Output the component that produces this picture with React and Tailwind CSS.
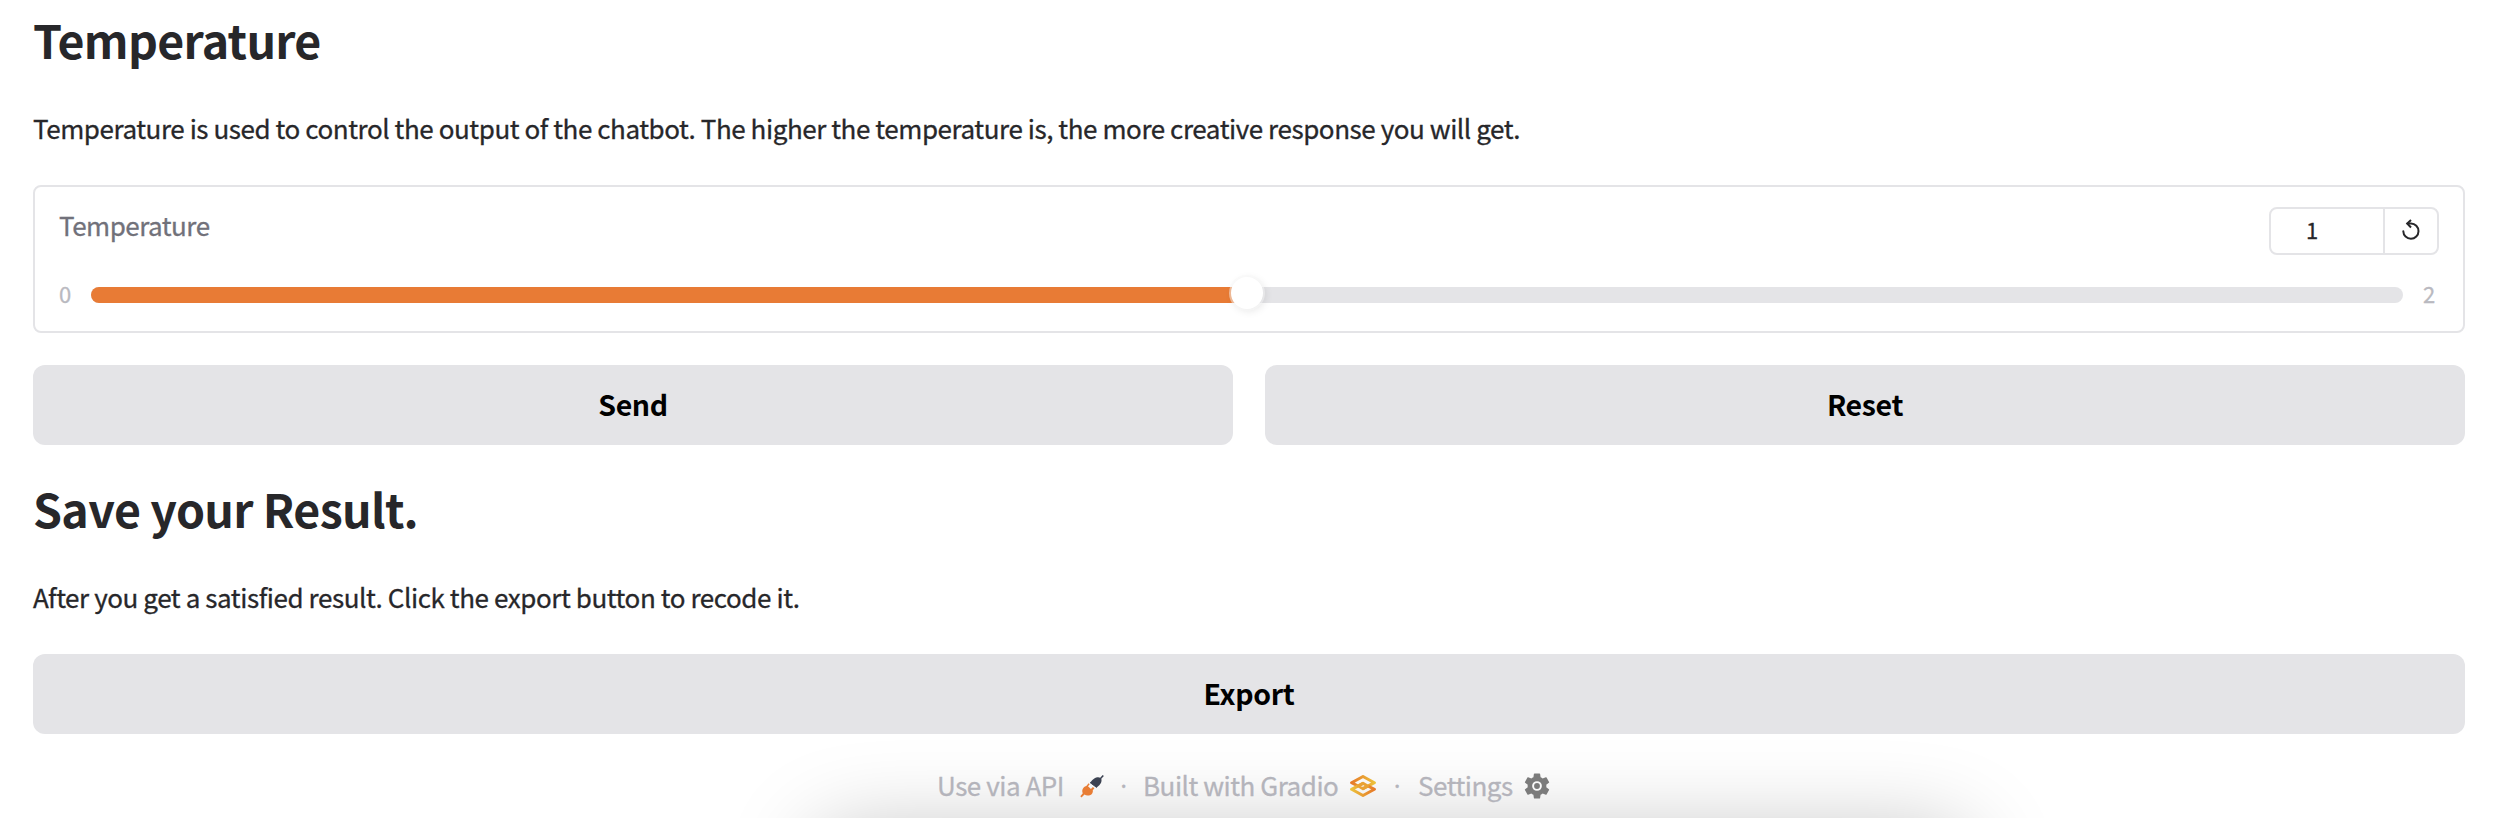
const PlugIcon = () => (
  <svg viewBox="0 0 24 24" className="h-6 w-6 shrink-0" fill="none">
    <path d="M10 8.500C11.500 7 14 3.500 17.500 3.200c1.200-.1 2 .1 2.700.6L22.700 .9l1.200 1.100-2.600 2.800c.8 2.700-.3 5.700-4.600 8.700Z" fill="#3c4252" />
    <path d="M10 8.500 16.700 13.500" stroke="#3c4252" strokeWidth="1" />
    <path d="M8.600 9.200l1.100 1.100-1.700 2 2.900 2.700 2-1.900 1.500 1.200-1.600 1.900c.4 2-.6 4.200-2.900 5-2 .7-4 .4-5.400-.6L1.500 23.500l-1.200-1.200 2.500-3.100c-1.200-2.600-.4-5.900 3.500-7.300Z" fill="#e87d35" />
  </svg>
);

const LayersIcon = () => (
  <svg viewBox="0 0 26 22" className="h-[22px] w-[26px] shrink-0" fill="none">
    <defs>
      <linearGradient id="upper" x1="0" y1="8" x2="26" y2="8" gradientUnits="userSpaceOnUse">
        <stop stopColor="#e67528" />
        <stop offset="1" stopColor="#ecc53c" />
      </linearGradient>
      <linearGradient id="lower" x1="26" y1="14" x2="0" y2="14" gradientUnits="userSpaceOnUse">
        <stop stopColor="#e67528" />
        <stop offset="1" stopColor="#ecc53c" />
      </linearGradient>
    </defs>
    <path d="M8 11 1.600 7.700 13 1.500l11.400 6.200L13 13.700" stroke="url(#upper)" strokeWidth="3" strokeLinejoin="round" />
    <path d="M18 11l6.400 3.300L13 20.500 1.600 14.300 13 8.300" stroke="url(#lower)" strokeWidth="3" strokeLinejoin="round" />
    <path d="M13 8.300 17.500 11 13 13.700 8.500 11Z" stroke="#e9a233" strokeWidth="3" strokeLinejoin="round" />
  </svg>
);

const GearIcon = () => (
  <svg viewBox="2 2 20 20" className="h-[26px] w-[26px] shrink-0">
    <path fill="#7b7b7b" d="M19.140 12.940c.04-.3.060-.61.060-.94 0-.32-.02-.64-.07-.94l2.030-1.580a.49.490 0 0 0 .12-.61l-1.920-3.320a.488.488 0 0 0-.59-.22l-2.390.96c-.5-.38-1.030-.7-1.620-.94l-.36-2.540a.484.484 0 0 0-.48-.41h-3.840c-.24 0-.43.170-.47.410l-.36 2.540c-.59.240-1.130.570-1.620.940l-2.390-.96c-.22-.08-.47 0-.59.220L2.740 8.870c-.12.210-.08.470.12.610l2.030 1.580c-.05.3-.09.630-.09.940s.02.640.07.940l-2.030 1.580a.49.490 0 0 0-.12.610l1.920 3.320c.12.220.37.290.59.220l2.390-.96c.5.380 1.030.7 1.620.94l.36 2.540c.05.240.240.410.480.410h3.840c.24 0 .44-.17.470-.41l.36-2.540c.59-.24 1.130-.56 1.620-.94l2.390.96c.22.080.47 0 .59-.22l1.920-3.320c.12-.22.070-.47-.12-.61l-2.010-1.580z" />
    <circle cx="12" cy="12" r="3" fill="none" stroke="#fafafa" strokeWidth="1.500" />
  </svg>
);

const UndoIcon = () => (
  <svg viewBox="0 0 18 21" className="h-[21px] w-[18px]" fill="none" stroke="#27272a" strokeWidth="2" strokeLinecap="round">
    <path d="M1.300 12.200A7.600 7.600 0 1 0 9 4.500H5.500" />
    <path d="M9 1 5.200 4.500 9 8.500" strokeLinecap="butt" />
  </svg>
);

const Action = ({ children }) => (
  <button className="h-20 flex-1 rounded-xl bg-[#e4e4e7] pb-[3px] text-[28.5px] leading-[77px] font-bold tracking-[-0.35px] text-black">{children}</button>
);

export default function App() {
  return (
    <main className="relative h-[818px] w-[2500px] overflow-hidden bg-white pr-[35px] pl-[33px] font-['Noto_Sans_CJK_SC',sans-serif] text-[#27272a]">
      <div className="absolute top-[842px] left-[825px] h-40 w-[1134px] rounded-3xl shadow-[0_0_88px_10px_rgba(0,0,0,0.25)]" />
      <div className="relative">
        <h1 className="pt-[9px] text-[46.500px] leading-[60px] font-bold tracking-[-0.7px]">Temperature</h1>
        <p className="mt-[39px] text-[26px] leading-10 tracking-[-0.437px] [-webkit-text-stroke:0.3px]">Temperature is used to control the output of the chatbot. The higher the temperature is, the more creative response you will get.</p>

        <section className="mt-[37px] h-[148px] rounded-lg border-2 border-[#e4e4e7] px-6 pt-5">
          <div className="flex h-12 items-start justify-between">
            <label className="text-[26px] leading-9 tracking-[-0.5px] text-[#71717a] [-webkit-text-stroke:0.3px]">Temperature</label>
            <div className="flex h-12 w-[170px] rounded-lg border-2 border-[#e4e4e7]">
              <span className="w-[114px] border-r-2 border-[#e4e4e7] pl-[35px] text-[22px] leading-[40px] [-webkit-text-stroke:0.3px]">1</span>
              <span className="flex flex-1 items-center justify-center pb-[3px]"><UndoIcon /></span>
            </div>
          </div>
          <div className="mt-4 flex h-12 items-center text-[22px] text-[#b9b9c0] [-webkit-text-stroke:0.3px]">
            <span className="w-8 pb-1 leading-7">0</span>
            <div className="relative h-4 flex-1 rounded-lg bg-[#e4e4e7]">
              <div className="h-4 w-1/2 rounded-l-lg bg-[#e87b35]" />
              <div className="absolute top-[-10px] left-[1140px] h-8 w-8 rounded-full bg-white shadow-[0_0_0_2px_rgba(247,247,247,0.5),2px_2px_8px_rgba(0,0,0,0.1)]" />
            </div>
            <span className="w-9 pb-1 pl-5 leading-7">2</span>
          </div>
        </section>

        <div className="mt-8 flex gap-8">
          <Action>Send</Action>
          <Action>Reset</Action>
        </div>

        <h2 className="mt-[33px] text-[46.500px] leading-[60px] font-bold tracking-[-0.65px]">Save your Result.</h2>
        <p className="mt-[39px] text-[26px] leading-10 tracking-[-0.42px] [-webkit-text-stroke:0.3px]">After you get a satisfied result. Click the export button to recode it.</p>
        <div className="mt-[37px] flex">
          <Action>Export</Action>
        </div>

        <footer className="mt-8 ml-[904px] flex h-10 items-center text-[26px] leading-9 tracking-[-0.47px] text-[#b4b4bb] [-webkit-text-stroke:0.3px]">
          <span className="w-[143px] pb-[3px]">Use via API</span>
          <PlugIcon />
          <span className="w-[39px] pb-[3px] text-center font-['Open_Sans']">·</span>
          <span className="w-[207px] pb-[3px]">Built with Gradio</span>
          <LayersIcon />
          <span className="w-[42px] pb-[3px] text-center font-['Open_Sans']">·</span>
          <span className="w-[106px] pb-[3px]">Settings</span>
          <GearIcon />
        </footer>
      </div>
    </main>
  );
}
